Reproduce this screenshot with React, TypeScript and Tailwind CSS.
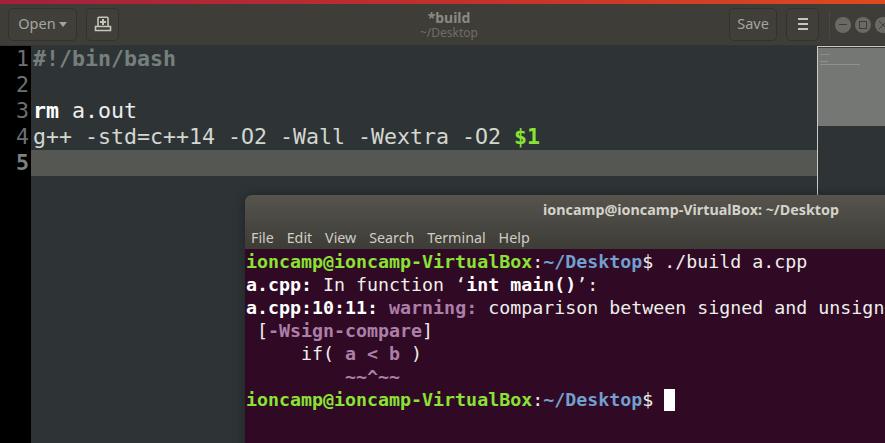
const mono = { fontFamily: '"DejaVu Sans Mono", monospace' }

const LINES = [
  <span className="font-bold text-[#75807c]">#!/bin/bash</span>,
  <span />,
  <span className="text-[#eeeeec]"><b className="text-white">rm</b> a.out</span>,
  <span className="text-[#d3d7cf]">g++ -std=c++14 -O2 -Wall -Wextra -O2 <b className="text-[#8ae234]">$1</b></span>,
  <span />,
]

function Prompt({ children }: { children?: React.ReactNode }) {
  return (
    <div>
      <b className="text-[#8ae234]">ioncamp@ioncamp-VirtualBox</b>
      <span>:</span>
      <b className="text-[#729fcf]">~/Desktop</b>
      <span>$ </span>
      {children}
    </div>
  )
}

export default function App() {
  return (
    <div className="relative w-[885px] h-[443px] overflow-hidden bg-[#2e3436] flex flex-col" style={{ fontFamily: '"Noto Sans", sans-serif' }}>
      <div className="h-[4px] bg-gradient-to-r from-[#a3203c] via-[#c0302c] to-[#dd4a1e]" />

      {/* gedit header */}
      <div className="h-[42px] flex items-center bg-[#3f3d38] border-b border-[#35332f] pl-[8px] text-[#a5a59c] text-[14.5px]">
        <button className="w-[69px] h-[33px] mt-[-1px] rounded-[5px] border border-[#34322e] bg-[#413f3a] flex items-center justify-center gap-[3px]">
          Open
          <span className="w-0 h-0 border-x-[4px] border-x-transparent border-t-[5px] border-t-[#a5a59c]" />
        </button>
        <button className="w-[33px] h-[33px] mt-[-1px] ml-[9px] rounded-[5px] border border-[#34322e] bg-[#413f3a] flex items-center justify-center">
          <svg width="18" height="16" viewBox="0 0 18 16" fill="none" stroke="#c5c5bc" strokeWidth="1.6">
            <path d="M4 10V2.2a1 1 0 0 1 1-1h8a1 1 0 0 1 1 1V10" />
            <path d="M1.5 10.5h15v4h-15z" />
            <path d="M9 3v6M6 6h6" strokeWidth="2" />
          </svg>
        </button>
        <div className="flex-1 flex flex-col items-center leading-[15px] pl-[50px]">
          <span className="text-[14px] font-bold text-[#8a8a82]">*build</span>
          <span className="text-[12px] text-[#6e6e67]">~/Desktop</span>
        </div>
        <button className="w-[48px] h-[33px] mt-[-1px] rounded-[5px] border border-[#34322e] bg-[#413f3a]">Save</button>
        <button className="w-[33px] h-[33px] mt-[-1px] ml-[9px] rounded-[5px] border border-[#34322e] bg-[#413f3a] flex flex-col items-center justify-center gap-[3px]">
          <span className="w-[10px] h-[2px] bg-[#c5c5bc]" />
          <span className="w-[10px] h-[2px] bg-[#c5c5bc]" />
          <span className="w-[10px] h-[2px] bg-[#c5c5bc]" />
        </button>
        <div className="w-px h-[28px] bg-[#4a4843] ml-[10px] mr-[5px]" />
        <div className="flex gap-[4px] w-[50px] shrink-0">
          {['min', 'max', 'close'].map(k => (
            <span key={k} className="w-[16px] h-[16px] shrink-0 rounded-full bg-[#6a6964] flex items-center justify-center">
              {k === 'min' && <span className="w-[8px] h-px bg-[#3f3d38]" />}
              {k === 'max' && <span className="w-[8px] h-[8px] border border-[#3f3d38]" />}
              {k === 'close' && (
                <svg width="8" height="8" viewBox="0 0 8 8" stroke="#3f3d38"><path d="M0 0l8 8M8 0L0 8" /></svg>
              )}
            </span>
          ))}
        </div>
      </div>

      {/* editor */}
      <div className="flex flex-1 min-h-0" style={mono}>
        <div className="w-[31px] bg-black text-[#6c7173] text-[21.6px] leading-[26px] text-right pr-[2px]">
          {[1, 2, 3, 4].map(n => <div key={n}>{n}</div>)}
          <div className="font-bold text-[#7d8183]">5</div>
        </div>
        <div className="flex-1 text-[21.6px] leading-[26px] whitespace-pre">
          {LINES.map((line, i) => (
            <div key={i} className={`h-[26px] pl-[2px] ${i === 4 ? 'bg-[#555753]' : ''}`}>{line}</div>
          ))}
        </div>
        <div className="w-[68px] border-l border-t border-[#c9cbc7] flex flex-col">
          <div className="h-[79px] bg-[#747774] border-t border-[#3a3c3a] pl-[2px] pt-[6px]">
            <div className="w-[10px] h-px bg-[#8a8d8a]" />
            <div className="w-[8px] h-px bg-[#8f918e] mt-[6px]" />
            <div className="w-[40px] h-px bg-[#8f918e] mt-[2px]" />
          </div>
          <div className="flex-1 bg-[#2e3436]" />
        </div>
      </div>

      {/* terminal window */}
      <div className="absolute left-[245px] top-[195px] w-[660px] h-[260px] rounded-t-[7px] overflow-hidden flex flex-col shadow-[0_0_12px_rgba(0,0,0,0.35)]">
        <div className="h-[54px] bg-gradient-to-b from-[#56544d] to-[#3d3c37] px-[6px] text-[#dfdbd2]">
          <div className="h-[30px] flex items-center pl-[292px] text-[14.3px] font-bold text-[#d5d2ca] whitespace-nowrap">
            ioncamp@ioncamp-VirtualBox: ~/Desktop
          </div>
          <div className="flex gap-[12.8px] text-[14.3px] leading-[26px] text-[#d0cdc5]">
            <span>File</span><span>Edit</span><span>View</span><span>Search</span><span>Terminal</span><span>Help</span>
          </div>
        </div>
        <div className="flex-1 bg-[#300a24] text-[18.3px] leading-[23px] text-[#eeeeec] pl-[1px] pt-[1px] whitespace-pre" style={mono}>
          <Prompt>./build a.cpp</Prompt>
          <div><b className="text-white">a.cpp:</b> In function ‘<b className="text-white">int main()</b>’:</div>
          <div><b className="text-white">a.cpp:10:11:</b> <b className="text-[#ad7fa8]">warning:</b> comparison between signed and unsigned</div>
          <div> [<b className="text-[#ad7fa8]">-Wsign-compare</b>]</div>
          <div>     if( <b className="text-[#ad7fa8]">a &lt; b</b> )</div>
          <div>       <b className="text-[#ad7fa8]">  ~~^~~</b></div>
          <Prompt><span className="inline-block w-[11px] h-[22px] bg-white align-[-5px]" /></Prompt>
        </div>
      </div>
    </div>
  )
}
